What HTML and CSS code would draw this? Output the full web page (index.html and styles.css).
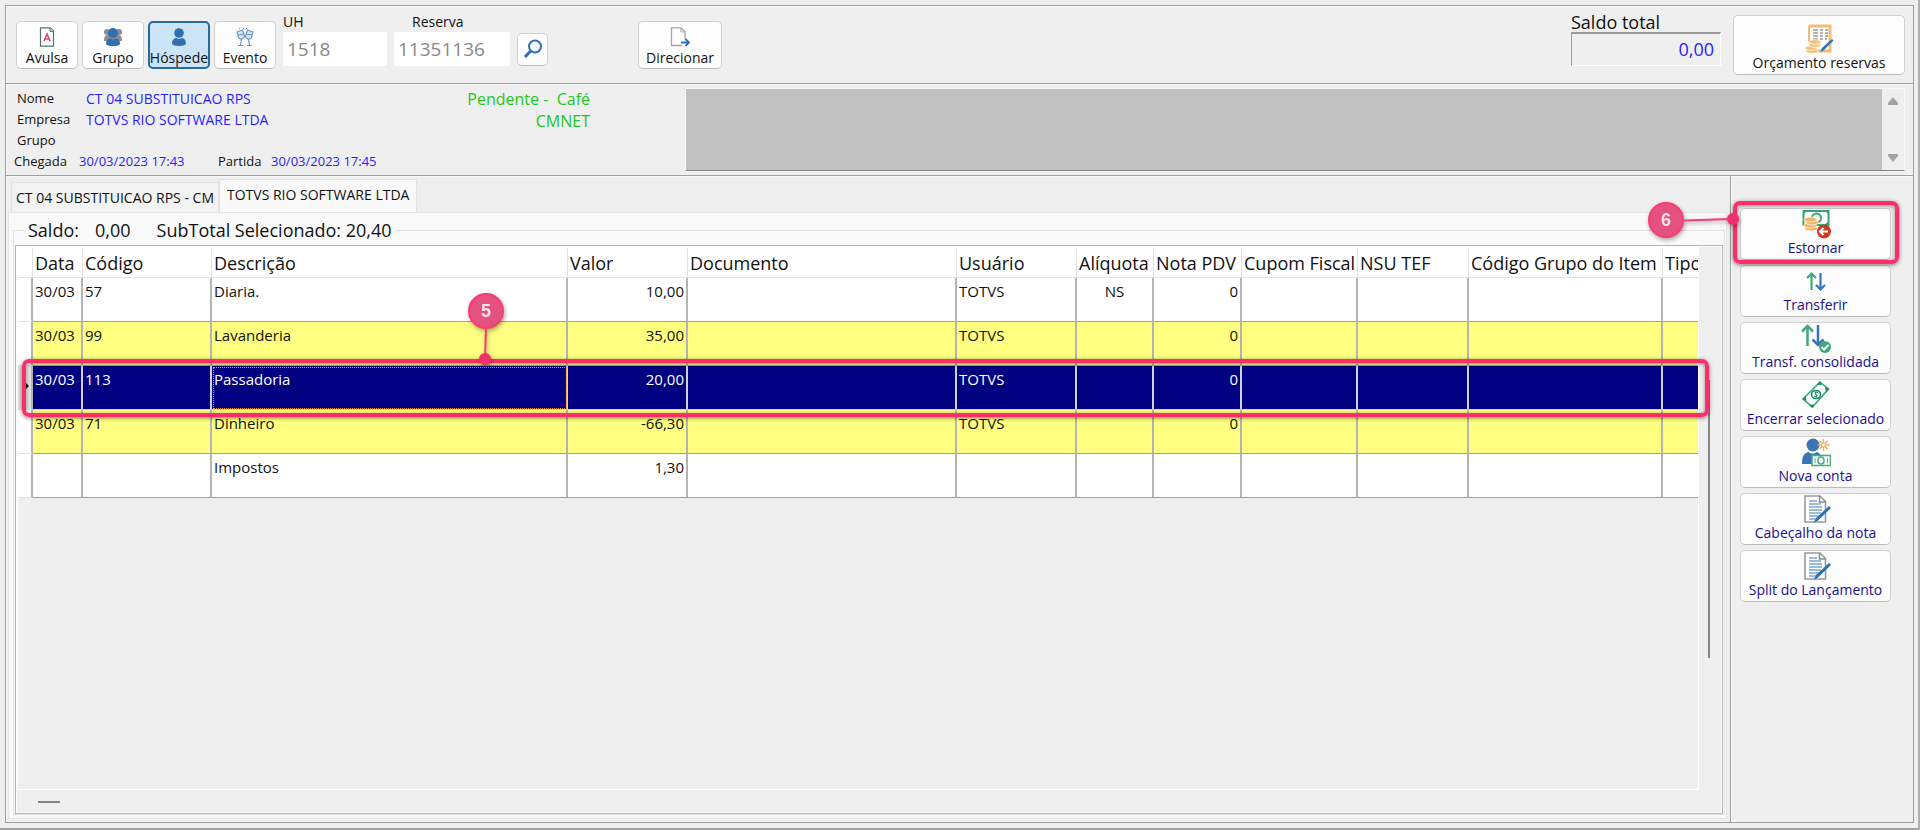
FILE: index.html
```html
<!DOCTYPE html>
<html lang="pt-BR">
  <head>
    <meta charset="UTF-8" />
    <title>Conta do hóspede</title>
    <link rel="stylesheet" href="styles.css">
  </head>
  <body>
    <div class="window">
      <header class="toolbar">
        <div class="btn_group">
          <button class="btn tool" type="button">
            <svg class="icon_sm" viewBox="0 0 20 20"><path d="M3.5.8h9.8l3.2 3.2v15.2h-13z" fill="#fff" stroke="#52756b" stroke-width="1.2"/><path d="M13 1v3.400h3.500" fill="#dbe7e3" stroke="#52756b"/><path d="M7 14l3-7 3 7M8 12h4" fill="none" stroke="#dc4c64" stroke-width="1.600"/></svg>
            Avulsa
          </button>
          <button class="btn tool" type="button">
            <svg class="icon_sm" viewBox="0 0 20 20"><g fill="#8d8d8d"><circle cx="4" cy="5" r="3"/><circle cx="16" cy="5" r="3"/><path d="M1 14c0-4 1-6 4-6h10c3 0 4 2 4 6z"/></g><circle cx="10" cy="6" r="5" fill="#2f6fb2"/><path d="M3 17c0-4 2-5.500 4.500-5.500 1.500 1.200 3.500 1.200 5 0 2.500 0 4.500 1.500 4.500 5.500-2 3-12 3-14 0z" fill="#2f6fb2"/></svg>
            Grupo
          </button>
          <button class="btn tool active" type="button">
            <svg class="icon_sm" viewBox="0 0 20 20"><circle cx="10" cy="6" r="4.800" fill="#2f6fb2"/><path d="M3 17c0-4 2-6 4.500-6 1.500 1.300 3.500 1.300 5 0 2.500 0 4.500 2 4.500 6-2 2.500-12 2.500-14 0z" fill="#2f6fb2"/></svg>
            Hóspede
          </button>
          <button class="btn tool" type="button">
            <svg class="icon_sm" viewBox="0 0 20 20"><g fill="#d5e6f7" stroke="#6f96c2" stroke-width="1.200"><path d="M2 5l5.500-2 2 6c0 3-4 4.500-6 1.500z"/><path d="M18 5l-5.500-2-2 6c0 3 4 4.500 6 1.500z"/><path d="M6.500 12l-1 6M3 18.500h5M13.500 12l1 6M12 18.500h5"/></g><path d="M3 8l6-1M11 7l6 1" stroke="#6f96c2"/><path d="M8 .5l1 2M12 .5l-1 2M4 1l1 1" stroke="#6f96c2"/></svg>
            Evento
          </button>
        </div>
        <div class="fields">
          <div class="field">
            <label for="uh">UH</label>
            <input class="input_uh" id="uh" type="text" value="1518" />
          </div>
          <div class="field field_reserva">
            <label for="reserva">Reserva</label>
            <input class="input_reserva" id="reserva" type="text" value="11351136" />
          </div>
          <button class="btn search" type="button" aria-label="Pesquisar">
            <svg viewBox="0 0 20 20"><circle cx="12" cy="7.500" r="6" fill="#f4f9ff" stroke="#2f6fb2" stroke-width="2"/><path d="M7.500 12L2 18" stroke="#2f6fb2" stroke-width="3"/></svg>
          </button>
        </div>
        <button class="btn direct" type="button">
          <svg class="icon_sm" viewBox="0 0 20 20"><path d="M12 18.500H1.500V.8h9.500l4 4v8" fill="#fff" stroke="#a5a5a5" stroke-width="1.300"/><path d="M11 1v4h4" fill="none" stroke="#a5a5a5"/><path d="M11 15.500h8M15.500 12l3.500 3.500-3.500 3.500" fill="none" stroke="#2f6fb2" stroke-width="1.800"/></svg>
          Direcionar
        </button>
        <div class="field field_total">
          <label for="total">Saldo total</label>
          <input class="input_total" id="total" type="text" value="0,00" readonly />
        </div>
        <button class="btn budget" type="button">
          <svg class="icon" viewBox="0 0 30 30"><path d="M5 2h21v25H12" fill="#fff" stroke="#f0bd79" stroke-width="3"/><path d="M5 2v16" stroke="#f0bd79" stroke-width="2"/><path d="M9 6h5M16 6h3M21 6h3M9 9h5M16 9h3M21 9h3M9 12h5M16 12h3M21 12h3M9 15h5M16 15h3M21 15h2" stroke="#9a9a9a" stroke-width="1.500"/><g fill="#f3c27b" stroke="#fff" stroke-width=".7"><ellipse cx="8" cy="27" rx="6" ry="2.300"/><ellipse cx="7" cy="24" rx="6" ry="2.300"/><ellipse cx="11" cy="21" rx="6" ry="2.300"/><ellipse cx="11" cy="18" rx="6" ry="2.300"/></g><path d="M16 28l2-4 10-9 1.500 1.500-10 10z" fill="#2f6fb2"/></svg>
          Orçamento reservas
        </button>
      </header>

      <section class="info">
        <div class="guest">
          <dl class="guest_data">
            <div><dt>Nome</dt><dd>CT 04 SUBSTITUICAO RPS</dd></div>
            <div><dt>Empresa</dt><dd>TOTVS RIO SOFTWARE LTDA</dd></div>
            <div><dt>Grupo</dt><dd></dd></div>
          </dl>
          <dl class="guest_dates">
            <dt>Chegada</dt><dd>30/03/2023 17:43</dd>
            <dt>Partida</dt><dd>30/03/2023 17:45</dd>
          </dl>
        </div>
        <div class="status">
          <div>Pendente - &nbsp;Café</div>
          <div>CMNET</div>
        </div>
        <div class="memo">
          <textarea aria-label="Observações" readonly></textarea>
          <div class="memo_scroll">
            <svg viewBox="0 0 10 8"><path d="M5 0L10 6v2H0V6z" fill="#a3a3a3"/></svg>
            <svg viewBox="0 0 10 8"><path d="M5 8L10 2V0H0v2z" fill="#a3a3a3"/></svg>
          </div>
        </div>
      </section>

      <div class="content">
        <main class="account">
          <div class="tabs" role="tablist">
            <button class="tab" type="button" role="tab">CT 04 SUBSTITUICAO RPS - CM</button>
            <button class="tab current" type="button" role="tab" aria-selected="true">TOTVS RIO SOFTWARE LTDA</button>
          </div>
          <div class="page">
            <fieldset>
              <legend><span>Saldo:</span><span>0,00</span><span class="subtotal">SubTotal Selecionado: 20,40</span></legend>
              <div class="grid">
                <div class="grid_view">
                  <table>
                    <colgroup>
                      <col class="c_mark"><col class="c_data"><col class="c_codigo"><col class="c_descr"><col class="c_valor"><col class="c_doc"><col class="c_usuario"><col class="c_aliq"><col class="c_nota"><col class="c_cupom"><col class="c_nsu"><col class="c_grupo"><col class="c_tipo">
                    </colgroup>
                    <thead>
                      <tr><th></th><th>Data</th><th>Código</th><th>Descrição</th><th>Valor</th><th>Documento</th><th>Usuário</th><th>Alíquota</th><th>Nota PDV</th><th>Cupom Fiscal</th><th>NSU TEF</th><th>Código Grupo do Item</th><th>Tipo</th></tr>
                    </thead>
                    <tbody>
                      <tr><td></td><td>30/03</td><td>57</td><td>Diaria.</td><td class="num">10,00</td><td></td><td>TOTVS</td><td class="mid">NS</td><td class="num">0</td><td></td><td></td><td></td><td></td></tr>
                      <tr class="yellow"><td></td><td>30/03</td><td>99</td><td>Lavanderia</td><td class="num">35,00</td><td></td><td>TOTVS</td><td></td><td class="num">0</td><td></td><td></td><td></td><td></td></tr>
                      <tr class="selected"><td class="marker"></td><td>30/03</td><td>113</td><td class="focus">Passadoria</td><td class="num">20,00</td><td></td><td>TOTVS</td><td></td><td class="num">0</td><td></td><td></td><td></td><td></td></tr>
                      <tr class="yellow"><td></td><td>30/03</td><td>71</td><td>Dinheiro</td><td class="num">-66,30</td><td></td><td>TOTVS</td><td></td><td class="num">0</td><td></td><td></td><td></td><td></td></tr>
                      <tr><td></td><td></td><td></td><td>Impostos</td><td class="num">1,30</td><td></td><td></td><td></td><td></td><td></td><td></td><td></td><td></td></tr>
                    </tbody>
                  </table>
                </div>
                <div class="scroll_y"><div class="thumb"></div></div>
                <div class="scroll_x"><div class="thumb"></div></div>
                <div class="frame frame_row">
                  <svg class="pin pin_row" viewBox="0 0 40 80"><path d="M20 38L19 67" stroke="#fb3a74" stroke-width="2"/><circle cx="19" cy="68" r="6" fill="#f0306a"/><circle cx="20" cy="20" r="17" fill="#e4527f" stroke="#fb3a74" stroke-width="2"/><text x="20" y="26">5</text></svg>
                </div>
              </div>
            </fieldset>
          </div>
        </main>

        <aside class="actions">
          <div class="marked">
            <button class="btn action" type="button">
              <svg class="icon" viewBox="0 0 30 30"><rect x="2.500" y="2" width="25" height="14" fill="#fff" stroke="#38a577" stroke-width="2"/><circle cx="15.500" cy="9" r="4.500" fill="none" stroke="#38a577" stroke-width="2"/><path d="M2 1.500h5l-5 4zM28 1.500h-5l5 4zM28 16h-5l5-4z" fill="#38a577"/><g fill="#f2b566" stroke="#fff" stroke-width=".7"><ellipse cx="10" cy="19.500" rx="6.500" ry="2.400"/><ellipse cx="9" cy="16.500" rx="6.500" ry="2.400"/><ellipse cx="11" cy="13.500" rx="6.500" ry="2.400"/><ellipse cx="9.500" cy="10.500" rx="6.500" ry="2.400"/></g><circle cx="23" cy="22.500" r="7" fill="#cc3b26"/><path d="M27 22.500h-8M22.500 19L19 22.500l3.500 3.500" fill="none" stroke="#fff" stroke-width="2"/></svg>
              Estornar
            </button>
            <div class="frame frame_button">
              <svg class="pin pin_button" viewBox="0 0 100 40"><path d="M38 20.500L86 19" stroke="#fb3a74" stroke-width="2"/><circle cx="87" cy="19" r="6" fill="#f0306a"/><circle cx="20" cy="20" r="17" fill="#e4527f" stroke="#fb3a74" stroke-width="2"/><text x="20" y="26">6</text></svg>
            </div>
          </div>
          <button class="btn action" type="button">
            <svg class="icon" viewBox="0 0 30 30"><path d="M10.500 24V8M6 12l4.500-4.500L15 12" fill="none" stroke="#43a77d" stroke-width="2.200"/><path d="M19.500 7v16M15 19l4.500 4.500L24 19" fill="none" stroke="#3a75b3" stroke-width="2.200"/></svg>
            Transferir
          </button>
          <button class="btn action" type="button">
            <svg class="icon" viewBox="0 0 30 30"><path d="M6.500 23V3M1 8.500L6.500 3l5.500 5.500" fill="none" stroke="#43a77d" stroke-width="2.500"/><path d="M17 2v19M11.500 16.500L17 22l5.500-5.500" fill="none" stroke="#3a75b3" stroke-width="2.500"/><circle cx="24" cy="24" r="6" fill="#43a77d"/><path d="M20.500 24l2.500 2.500 4.500-4.500" fill="none" stroke="#fff" stroke-width="2"/></svg>
            Transf. consolidada
          </button>
          <button class="btn action" type="button">
            <svg class="icon" viewBox="0 0 30 30"><path d="M2 19L19 2l8.500 7L11.500 27z" fill="#fff" stroke="#38a577" stroke-width="1.600"/><path d="M1.500 19l3-3 1 5zM19 1.500l-3 3 5 1zM28 9l-3 3-1-5zM11.500 28l-4-3 6-.5z" fill="#168b57"/><ellipse cx="15" cy="14.500" rx="4.500" ry="4" fill="#fff" stroke="#168b57" stroke-width="1.600"/><path d="M17 12.500c-3-1-4 1-2 2s1 3-2 1.500M14 11.500l2 6" fill="none" stroke="#168b57"/></svg>
            Encerrar selecionado
          </button>
          <button class="btn action" type="button">
            <svg class="icon" viewBox="0 0 30 30"><circle cx="12" cy="8" r="6.500" fill="#3a75b3"/><path d="M1 27c0-8 2-11 6.500-12 2 2 6 2 8 0 4 1 6 4 6 12z" fill="#3a75b3"/><path d="M22.500 2v12M16.500 8h12M18.500 4l8 8M26.500 4l-8 8" stroke="#f0ad53" stroke-width="1.300"/><circle cx="22.500" cy="8" r="2" fill="#fff" stroke="#f0ad53"/><rect x="11" y="18.500" width="18.500" height="10" fill="#fff" stroke="#48ad83" stroke-width="1.600"/><ellipse cx="20" cy="23.500" rx="3" ry="3.500" fill="none" stroke="#48ad83" stroke-width="1.600"/><path d="M14 21v5M26.500 21v5" stroke="#48ad83"/></svg>
            Nova conta
          </button>
          <button class="btn action" type="button">
            <svg class="icon" viewBox="0 0 30 30"><path d="M4 2h15l5.500 5.500V28H4z" fill="#fff" stroke="#999" stroke-width="1.600"/><path d="M18.500 2v6h6" fill="none" stroke="#888" stroke-width="1.500"/><path d="M8 7h8M8 10h12M8 13h13M8 16h13M8 19h12M8 22h10M8 25h7" stroke="#9dbbdc" stroke-width="2"/><path d="M12.500 29l2.500-5L28 12l2 2-13 12.500z" fill="#2f6fb2"/></svg>
            Cabeçalho da nota
          </button>
          <button class="btn action" type="button">
            <svg class="icon" viewBox="0 0 30 30"><path d="M4 2h15l5.500 5.500V28H4z" fill="#fff" stroke="#999" stroke-width="1.600"/><path d="M18.500 2v6h6" fill="none" stroke="#888" stroke-width="1.500"/><path d="M8 7h8M8 10h12M8 13h13M8 16h13M8 19h12M8 22h10M8 25h7" stroke="#9dbbdc" stroke-width="2"/><path d="M12.500 29l2.500-5L28 12l2 2-13 12.500z" fill="#2f6fb2"/></svg>
            Split do Lançamento
          </button>
        </aside>
      </div>
    </div>
  </body>
</html>
```
FILE: styles.css
```css
* {
  box-sizing: border-box;
}

body {
  margin: 0;
  font-family: "Open Sans", "Noto Sans", sans-serif;
  font-size: 14px;
  color: #111;
  background: #efefef;
}

button,
input,
textarea {
  font: inherit;
  color: inherit;
}

dl,
dd {
  margin: 0;
}

svg {
  display: block;
}

.window {
  display: flex;
  flex-direction: column;
  min-height: 100vh;
  padding: 5px 4px 5px 5px;
  border-right: 2px solid #b0b0b0;
  border-bottom: 2px solid #a0a0a0;
}

.toolbar,
.info,
.content {
  border: 1px solid #a0a0a0;
  border-bottom: 0;
  box-shadow: inset 1px 1px 0 #f8f8f8;
}

.btn {
  display: flex;
  flex-direction: column;
  align-items: center;
  justify-content: flex-end;
  padding: 0;
  line-height: 18px;
  white-space: nowrap;
  border: 1px solid #d0d0d0;
  border-bottom-color: #bbb;
  border-radius: 5px;
  background: #fdfdfd;
}

.icon_sm {
  width: 20px;
  height: 20px;
}

.icon {
  width: 30px;
  height: 30px;
}

/* toolbar */
.toolbar {
  display: flex;
  align-items: center;
  height: 78px;
  padding: 0 8px 0 10px;
}

.btn_group {
  display: flex;
  gap: 4px;
}

.tool {
  width: 62px;
  height: 48px;
}

.tool,
.direct {
  gap: 2px;
  padding-bottom: 1px;
}

.tool.active {
  border: 2px solid #2a699e;
  padding-bottom: 0;
  background: #cce4f7;
}

.fields {
  display: flex;
  align-items: flex-end;
  gap: 7px;
  margin-left: 7px;
}

.field {
  display: flex;
  flex-direction: column;
}

.fields,
.field_total {
  padding-bottom: 12px;
}

.field label {
  line-height: 20px;
}

.field input {
  height: 34px;
  padding: 0 4px;
  font-size: 19px;
  color: #888;
  border: 0;
  background: #fff;
}

.field .input_uh {
  width: 104px;
}

.field .input_reserva {
  width: 116px;
}

.field_reserva label {
  padding-left: 18px;
}

.search {
  align-items: center;
  justify-content: center;
  width: 31px;
  height: 33px;
}

.search svg {
  width: 20px;
  height: 20px;
}

.direct {
  width: 84px;
  height: 48px;
  margin-left: 90px;
}

.field_total {
  margin-left: auto;
}

.field_total label {
  font-size: 18px;
}

.field .input_total {
  width: 150px;
  padding-right: 6px;
  font-size: 18px;
  text-align: right;
  color: #2a1cff;
  border: 1px solid #fff;
  border-top: 2px solid #999;
  border-left: 1px solid #999;
  background: #efefef;
}

.budget {
  width: 172px;
  height: 60px;
  margin-left: 12px;
  padding-bottom: 2px;
}

/* guest data */
.info {
  display: flex;
  height: 92px;
  padding: 4px 8px 4px 8px;
}

.guest {
  width: 364px;
  line-height: 21px;
}

.guest_data div {
  display: flex;
  height: 21px;
}

.guest dt {
  font-size: 13px;
}

.guest_data dt {
  width: 72px;
  padding-left: 3px;
}

.guest dd {
  color: #2a1cff;
  white-space: nowrap;
}

.guest_dates {
  display: flex;
}

.guest_dates dt {
  width: 65px;
}

.guest_dates dd + dt {
  width: 53px;
  margin-left: 32px;
}

.guest_dates dd {
  width: 107px;
  font-size: 13px;
}

.status {
  width: 212px;
  font-size: 16px;
  line-height: 22px;
  text-align: right;
  color: #1fc61f;
}

.memo {
  display: flex;
  flex: 1;
  margin-left: 95px;
  border: 1px solid #f8f8f8;
  border-bottom: 1px solid #888;
}

.memo textarea {
  flex: 1;
  border: 0;
  resize: none;
  background: silver;
}

.memo_scroll {
  display: flex;
  flex-direction: column;
  justify-content: space-between;
  align-items: center;
  width: 22px;
  padding: 8px 0;
}

.memo_scroll svg {
  width: 10px;
  height: 8px;
}

/* account */
.content {
  display: flex;
  flex: 1;
  border-bottom: 1px solid #a0a0a0;
}

.account {
  display: flex;
  flex: 1;
  flex-direction: column;
  min-width: 0;
  padding: 3px 3px 3px 2px;
}

.tabs {
  display: flex;
  align-items: flex-end;
  padding-left: 3px;
}

.tab {
  height: 30px;
  padding: 0 4px;
  white-space: nowrap;
  border: 1px solid #e2e2e2;
  border-bottom: 0;
  background: #f3f3f3;
}

.tab.current {
  height: 33px;
  padding: 0 7px 4px;
  background: #f9f9f9;
}

.page {
  display: flex;
  flex: 1;
  border: 1px solid #e5e5e5;
  background: #f9f9f9;
}

fieldset {
  display: flex;
  flex: 1;
  flex-direction: column;
  min-width: 0;
  margin: 5px 1px 3px 4px;
  padding: 0 1px;
  border: 1px solid #e2e2e2;
}

legend {
  margin-left: 9px;
  padding: 0 4px;
  font-size: 18px;
  line-height: 24px;
}

legend span {
  margin-right: 16px;
}

legend .subtotal {
  margin: 0 0 0 10px;
}

.grid {
  position: relative;
  display: grid;
  flex: 1;
  grid-template-columns: minmax(0, 1fr) 22px;
  grid-template-rows: 1fr 22px;
  margin-top: 3px;
  padding: 1px;
  border: 1px solid #b4b4ba;
  background: #efefef;
  box-shadow: inset 0 0 0 1px #fff;
}

.grid_view {
  overflow: hidden;
  border: 1px solid #fff;
}

table {
  width: 1760px;
  table-layout: fixed;
  border-spacing: 0;
  background: #fff;
}

.c_mark { width: 15px; }
.c_data { width: 50px; }
.c_codigo { width: 129px; }
.c_descr { width: 356px; }
.c_valor { width: 120px; }
.c_doc { width: 269px; }
.c_usuario { width: 120px; }
.c_aliq { width: 77px; }
.c_nota { width: 88px; }
.c_cupom { width: 116px; }
.c_nsu { width: 111px; }
.c_grupo { width: 194px; }

th {
  height: 30px;
  padding: 0 0 0 2px;
  font-size: 18px;
  font-weight: normal;
  text-align: left;
  white-space: nowrap;
  border-right: 1px solid #e2e2e2;
  border-bottom: 1px solid #e2e2e2;
}

td {
  height: 44px;
  padding: 2px 2px 0 2px;
  font-size: 15px;
  line-height: 22px;
  vertical-align: top;
  border-right: 2px solid #b4b4b4;
  border-bottom: 1px solid #a0a0a0;
}

td:first-child {
  border-bottom-color: #e2e2e2;
}

.num {
  text-align: right;
}

.mid {
  text-align: center;
}

.yellow td:not(:first-child) {
  background: #ffff80;
}

.selected td:not(:first-child) {
  color: #fff;
  background: #000080;
  border-right-color: #d0d0d0;
  border-bottom-color: #d0d0d0;
}

.selected .focus {
  outline: 1px dotted #f09a3c;
  outline-offset: -2px;
}

.selected .marker {
  padding: 16px 0 0 7px;
  background: #e2e2e2;
}

.marker::before {
  content: "";
  display: block;
  width: 0;
  border: 4px solid transparent;
  border-left-color: #111;
}

.thumb {
  background: #858585;
}

.scroll_y {
  padding: 133px 0 0 9px;
  border-bottom: 1px solid #efefef;
}

.scroll_y .thumb {
  width: 2px;
  height: 278px;
}

.scroll_x {
  grid-column: 1 / 3;
  padding: 11px 0 0 21px;
}

.scroll_x .thumb {
  width: 22px;
  height: 2px;
}

/* numbered marks over the grid and the button */
.frame {
  position: absolute;
  border: 4px solid #ff2d6a;
  border-radius: 7px;
  box-shadow: 0 1px 4px rgba(0, 0, 0, 0.5), inset 0 1px 4px rgba(0, 0, 0, 0.4);
  pointer-events: none;
}

.frame_row {
  top: 113px;
  right: 13px;
  left: 6px;
  height: 58px;
}

.pin {
  position: absolute;
  filter: drop-shadow(1px 2px 2px rgba(0, 0, 0, 0.35));
}

.pin text {
  font: bold 18px "Liberation Sans", sans-serif;
  text-anchor: middle;
  fill: #fbe3ea;
}

.pin_row {
  top: -72px;
  left: 440px;
  width: 40px;
  height: 80px;
}

.pin_button {
  top: -5px;
  left: -91px;
  width: 100px;
  height: 40px;
}

/* side buttons */
.actions {
  display: flex;
  flex-direction: column;
  gap: 5px;
  width: 183px;
  padding: 32px 0 0 9px;
  border-left: 1px solid #a0a0a0;
  box-shadow: inset 1px 1px 0 #f8f8f8;
}

.action {
  width: 151px;
  height: 52px;
  padding-bottom: 2px;
  color: #1b0f8c;
}

.marked {
  position: relative;
  width: 151px;
}

.frame_button {
  top: -7px;
  right: -8px;
  bottom: -4px;
  left: -7px;
}
```
